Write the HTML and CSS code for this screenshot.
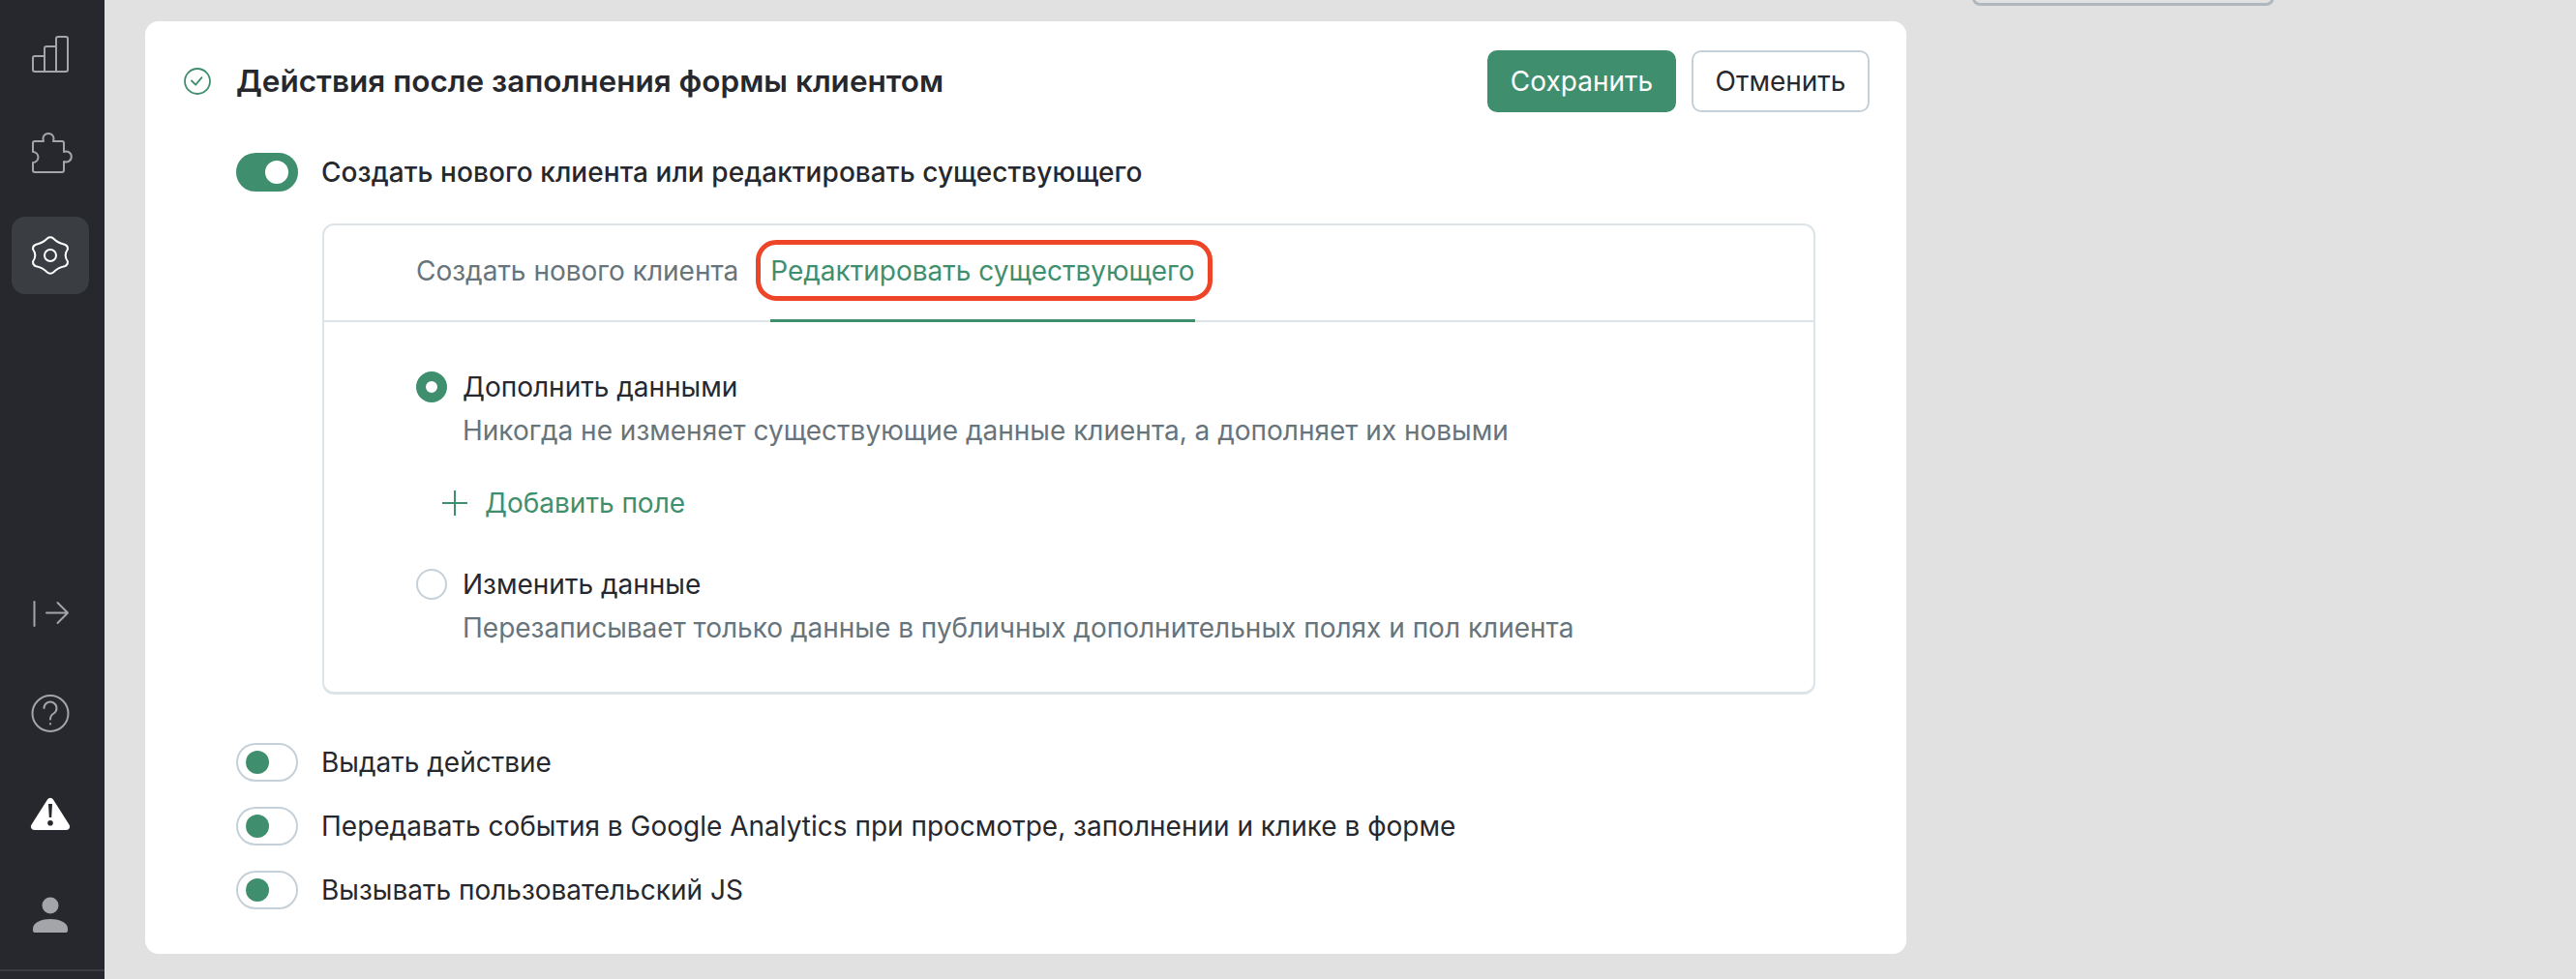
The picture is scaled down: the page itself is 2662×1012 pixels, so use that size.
FILE: index.html
```html
<!DOCTYPE html>
<html lang="ru">

<head>
    <meta charset="UTF-8">
    <title>Действия после заполнения формы</title>
    <link rel="stylesheet" href="styles.css">
</head>

<body>
    <nav class="sidebar">
        <div class="side-group">
            <div class="side-item">
                <svg class="side-icon" viewBox="28 32 48 48"><path d="M36 58H46V50A2 2 0 0 1 48 48H58V40A2 2 0 0 1 60 38H68A2 2 0 0 1 70 40V72A2 2 0 0 1 68 74H36A2 2 0 0 1 34 72V60A2 2 0 0 1 36 58ZM46 58V74M58 48V74"/></svg>
            </div>
            <div class="side-item">
                <svg class="side-icon" viewBox="28 136 48 48"><path d="M36 146H45A5.6 5.6 0 1 1 55 146H64A2 2 0 0 1 66 148V157A5.5 5.5 0 1 1 66 167V176A2 2 0 0 1 64 178H36A2 2 0 0 1 34 176V168A5.5 5.5 0 1 0 34 157V148A2 2 0 0 1 36 146Z"/></svg>
            </div>
            <div class="side-item side-item-active">
                <svg class="side-icon" viewBox="-24 -24 48 48"><path d="M-3.12 -17.45A4.6 4.6 0 0 1 3.12 -17.45Q8.1 -12.5 14.75 -11.23A4.6 4.6 0 0 1 17.87 -6.22Q13.5 0 17.87 6.22A4.6 4.6 0 0 1 14.75 11.23Q8.1 12.5 3.12 17.45A4.6 4.6 0 0 1 -3.12 17.45Q-8.1 12.5 -14.75 11.23A4.6 4.6 0 0 1 -17.87 6.22Q-13.5 0 -17.87 -6.22A4.6 4.6 0 0 1 -14.75 -11.23Q-8.1 -12.5 -3.12 -17.45Z"/><circle cx="0" cy="0" r="6"/></svg>
            </div>
        </div>
        <div class="side-group side-group-bottom">
            <div class="side-item">
                <svg class="side-icon" viewBox="28 609 48 48"><path d="M35.5 622V647M48 633.5H70M59.5 623L70 633.5L59.5 644"/></svg>
            </div>
            <div class="side-item">
                <svg class="side-icon" viewBox="28 713 48 48"><circle cx="52" cy="737.5" r="18.5"/><path d="M45.5 732A6.5 6.5 0 1 1 55.5 737.5C53 739 52 740.5 52 743.5M52 748V748.5"/></svg>
            </div>
            <div class="side-item">
                <svg class="side-icon" viewBox="28 817 48 48"><path class="warn-fill" d="M49 826.5A3.5 3.5 0 0 1 55 826.5L71.5 852.5A3.5 3.5 0 0 1 68.5 858H35.5A3.5 3.5 0 0 1 32.5 852.5Z"/><path class="warn-mark" d="M50 831H54L53.2 845H50.8ZM52 848A2.8 2.8 0 1 1 52 853.6A2.8 2.8 0 1 1 52 848Z"/></svg>
            </div>
            <div class="side-item">
                <svg class="side-icon" viewBox="28 921 48 48"><circle class="user-fill" cx="52" cy="936" r="8.5"/><path class="user-fill" d="M34 960C34 953 44 950 52 950C60 950 70 953 70 960V962A2 2 0 0 1 68 964H36A2 2 0 0 1 34 962Z"/></svg>
            </div>
        </div>
        <div class="side-line"></div>
    </nav>

    <main class="content">
        <section class="card">
            <header class="card-head">
                <svg class="check-icon" viewBox="0 0 28 28"><circle cx="14" cy="14" r="13"/><path d="M8 13.5L12.2 17.7L18.5 10.2"/></svg>
                <h2 class="card-title">Действия после заполнения формы клиентом</h2>
                <button class="btn btn-save">Сохранить</button>
                <button class="btn btn-cancel">Отменить</button>
            </header>

            <div class="toggle-row toggle-row-main">
                <span class="toggle toggle-filled"></span>
                <span>Создать нового клиента или редактировать существующего</span>
            </div>

            <div class="panel">
                <div class="tabs">
                    <div class="tab">Создать нового клиента</div>
                    <div class="tab tab-active">Редактировать существующего<span class="tab-mark"></span></div>
                </div>
                <div class="panel-body">
                    <div class="radio-row">
                        <span class="radio radio-on"></span>
                        <div>
                            <div class="radio-label">Дополнить данными</div>
                            <div class="radio-desc">Никогда не изменяет существующие данные клиента, а дополняет их новыми</div>
                        </div>
                    </div>
                    <div class="add-field">
                        <svg class="plus-icon" viewBox="0 0 26 26"><path d="M13 0V26M0 13H26"/></svg>
                        <span>Добавить поле</span>
                    </div>
                    <div class="radio-row">
                        <span class="radio"></span>
                        <div>
                            <div class="radio-label">Изменить данные</div>
                            <div class="radio-desc">Перезаписывает только данные в публичных дополнительных полях и пол клиента</div>
                        </div>
                    </div>
                </div>
            </div>

            <div class="toggle-list">
                <div class="toggle-row">
                    <span class="toggle"></span>
                    <span>Выдать действие</span>
                </div>
                <div class="toggle-row">
                    <span class="toggle"></span>
                    <span>Передавать события в Google Analytics при просмотре, заполнении и клике в форме</span>
                </div>
                <div class="toggle-row">
                    <span class="toggle"></span>
                    <span>Вызывать пользовательский JS</span>
                </div>
            </div>
        </section>

        <aside class="side-column">
            <div class="cut-box"></div>
        </aside>
    </main>
</body>

</html>
```

FILE: styles.css
```css
body {
    margin: 0;
    height: 1012px;
    overflow: hidden;
    display: flex;
    background-color: #e1e1e1;
    font-family: Inter, "Noto Sans", sans-serif;
    font-size: 28px;
    color: #26282d;
}

/* боковая панель */
.sidebar {
    width: 108px;
    flex: none;
    display: flex;
    flex-direction: column;
    background-color: #26282d;
}

.side-group {
    display: flex;
    flex-direction: column;
    gap: 24px;
    padding: 16px 12px 0;
}

.side-group-bottom {
    margin-top: auto;
    padding-top: 0;
}

.side-item {
    width: 80px;
    height: 80px;
    display: flex;
    align-items: center;
    justify-content: center;
    border-radius: 14px;
}

.side-item-active {
    background-color: #3a3d42;
}

.side-icon {
    width: 48px;
    height: 48px;
    fill: none;
    stroke: #a3a5a8;
    stroke-width: 2;
    stroke-linecap: round;
    stroke-linejoin: round;
}

.side-item-active .side-icon {
    stroke: #fff;
}

.warn-fill {
    fill: #fff;
    stroke: none;
}

.warn-mark {
    fill: #26282d;
    stroke: none;
}

.user-fill {
    fill: #a3a5a8;
    stroke: none;
}

.side-line {
    height: 2px;
    margin: 17px 0 8px;
    background-color: #3a3c42;
}

/* основная часть */
.content {
    flex: 1;
    display: flex;
    align-items: flex-start;
    padding: 22px 0 0 42px;
}

.card {
    width: 1820px;
    height: 964px;
    flex: none;
    box-sizing: border-box;
    padding: 30px 38px 0 40px;
    background-color: #fff;
    border-radius: 14px;
}

.card-head {
    display: flex;
    align-items: center;
    height: 64px;
}

.check-icon {
    width: 28px;
    height: 28px;
    margin-right: 26px;
    fill: none;
    stroke: #3f8f6e;
    stroke-width: 1.8;
    stroke-linecap: round;
    stroke-linejoin: round;
}

.card-title {
    flex: 1;
    margin: 0 0 2px;
    font-size: 31.5px;
    font-weight: 600;
}

.btn {
    height: 64px;
    box-sizing: border-box;
    border-radius: 10px;
    font-family: inherit;
    font-size: 28px;
}

.btn-save {
    width: 195px;
    margin-right: 16px;
    border: none;
    background-color: #3f8f6e;
    color: #fff;
}

.btn-cancel {
    width: 184px;
    border: 2px solid #c5d0d8;
    background-color: #fff;
    color: #26282d;
}

.toggle-row {
    display: flex;
    align-items: center;
    gap: 24px;
    margin-left: 54px;
}

.toggle-row-main {
    margin-top: 42px;
    font-weight: 500;
    letter-spacing: 0.06px;
}

.toggle {
    width: 64px;
    height: 40px;
    flex: none;
    position: relative;
    box-sizing: border-box;
    border: 2px solid #c5d0d8;
    border-radius: 20px;
    background-color: #fff;
}

.toggle::after {
    content: "";
    position: absolute;
    left: 8px;
    top: 6px;
    width: 24px;
    height: 24px;
    border-radius: 50%;
    background-color: #3f8f6e;
}

.toggle-filled {
    border-color: #3f8f6e;
    background-color: #3f8f6e;
}

.toggle-filled::after {
    left: 28px;
    background-color: #fff;
}

.panel {
    width: 1543px;
    height: 487px;
    box-sizing: border-box;
    margin: 33px 0 0 143px;
    border: 2px solid #dde4e8;
    border-bottom-width: 3px;
    border-radius: 12px;
}

.tabs {
    display: flex;
    gap: 33px;
    height: 98px;
    padding-left: 95px;
    border-bottom: 2px solid #dde4e8;
}

.tab {
    position: relative;
    line-height: 94px;
    color: #67747b;
}

.tab-active {
    height: 100px;
    box-sizing: border-box;
    border-bottom: 3px solid #3f8f6e;
    color: #3f8f6e;
}

.tab-mark {
    position: absolute;
    left: -15px;
    right: -18px;
    top: 15px;
    height: 63px;
    box-sizing: border-box;
    border: 5px solid #ee4427;
    border-radius: 21px;
}

.panel-body {
    padding: 51px 0 0 95px;
}

.radio-row {
    display: flex;
    gap: 16px;
}

.radio {
    width: 32px;
    height: 32px;
    flex: none;
    box-sizing: border-box;
    border: 2px solid #c5d0d8;
    border-radius: 50%;
}

.radio-on {
    border: 10px solid #3f8f6e;
}

.radio-label {
    line-height: 32px;
}

.radio-desc {
    margin-top: 13px;
    line-height: 32px;
    color: #67747b;
}

.add-field {
    display: flex;
    align-items: center;
    gap: 18px;
    height: 32px;
    margin: 43px 0 52px 27px;
    color: #3f8f6e;
}

.plus-icon {
    width: 26px;
    height: 26px;
    fill: none;
    stroke: #3f8f6e;
    stroke-width: 2;
}

.toggle-list {
    display: flex;
    flex-direction: column;
    gap: 26px;
    margin-top: 50px;
}

/* обрезанный блок справа */
.side-column {
    margin-left: 68px;
    margin-top: -22px;
}

.cut-box {
    width: 312px;
    height: 60px;
    box-sizing: border-box;
    margin-top: -54px;
    border: 3px solid #aeb8be;
    border-radius: 8px;
}
```
